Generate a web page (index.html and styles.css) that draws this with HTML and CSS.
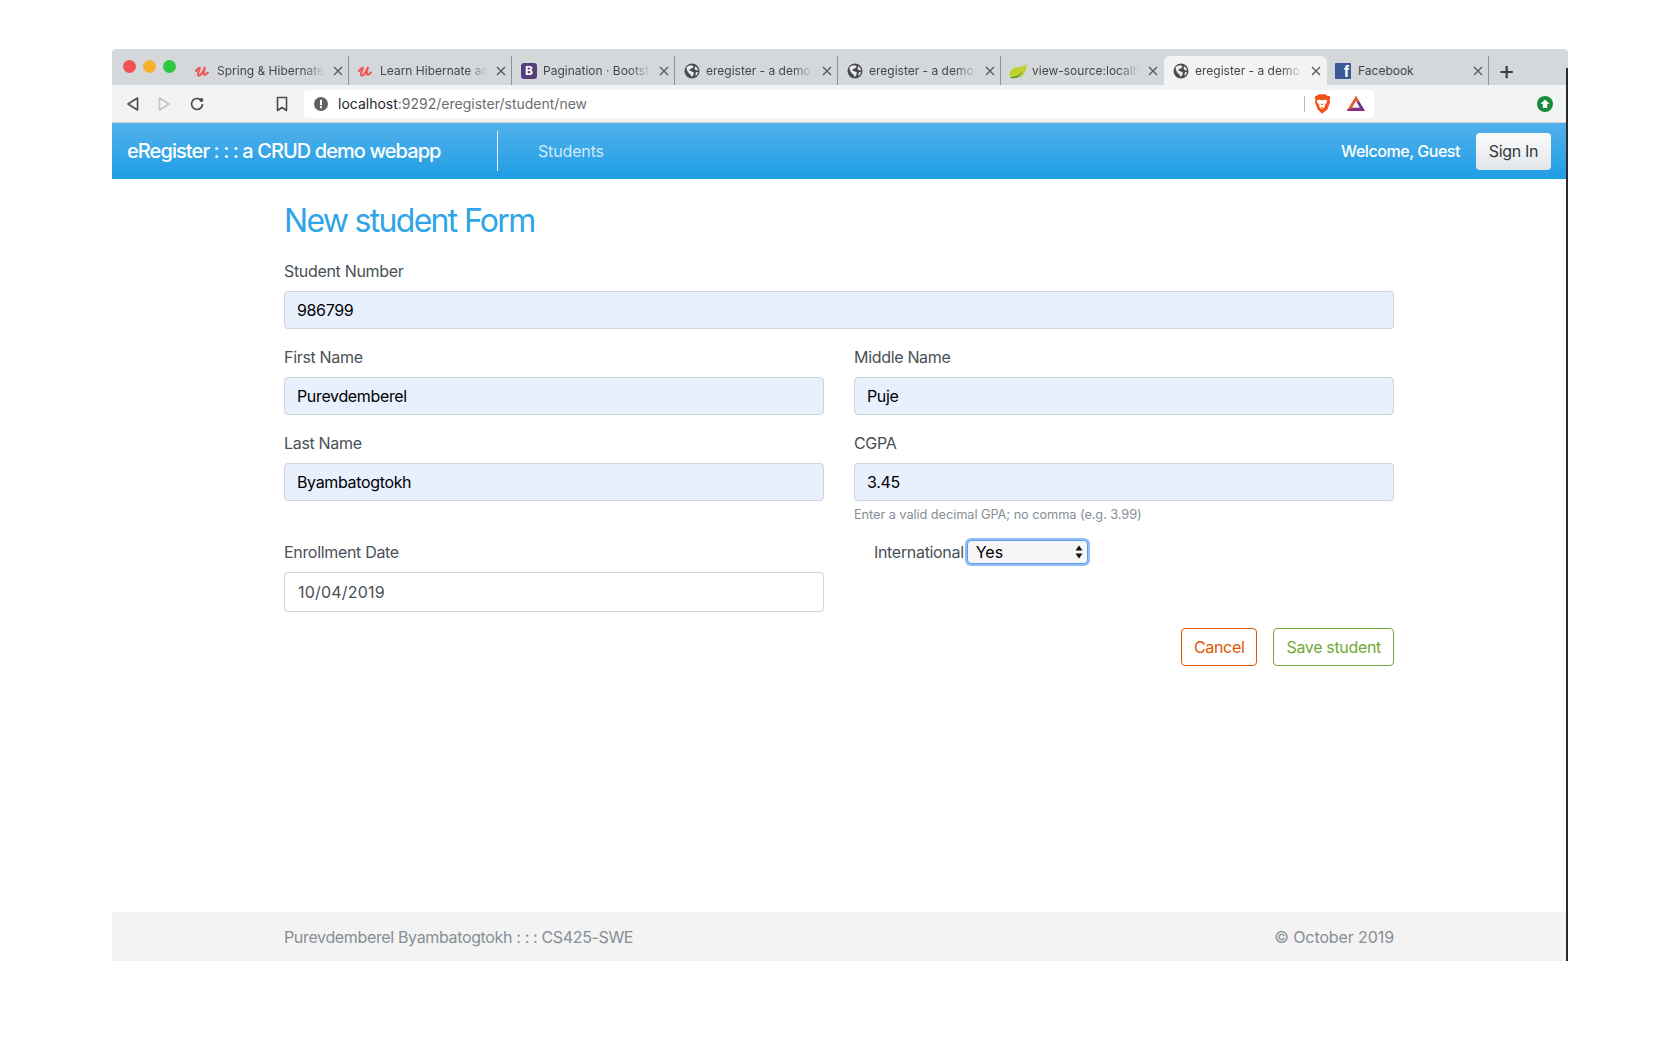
FILE: index.html
```html
<!DOCTYPE html>
<html>
<head>
  <meta http-equiv="Content-Type" content="text/html; charset=utf-8" />
  <title>eregister - a demo webapp</title>
<link rel="stylesheet" href="styles.css">
</head>
<body>

<svg class="defs" width="0" height="0">
  <symbol id="i-udemy" viewBox="0 0 16 16">
    <path d="M1 8c1.500-2 3-3.500 3.800-3-.4 2-2.200 5-1.800 6.800.4 1.400 2 .8 3.300-.8 1.500-1.900 2.800-4.300 3.500-6.300-.5 2.200-1.300 4.800-.9 6.500.3 1.100 2 .7 4-1.700" fill="none" stroke="#ef5a5a" stroke-width="2.100" stroke-linecap="round" stroke-linejoin="round"/>
  </symbol>
  <symbol id="i-globe" viewBox="0 0 16 16">
    <circle cx="8" cy="8" r="7.500" fill="#4a4c50"/>
    <path d="M2.500 4.500C3.800 3 5.500 2.200 7.500 2.200l2.300 1.300-2 2-2 .5-.3 1.800 2.500.6 2 1.400-.8 2.500-1.700 1.700-1-2.500-1.700-1.300-1.800-3zM11.500 3.200l2 2.300.5 2-2.500-.6-1-1.400zM11.800 9.300l2.200-.3-1 2.700-1.500 1.300z" fill="#eceded"/>
  </symbol>
  <symbol id="i-x" viewBox="0 0 10 10">
    <path d="M1 1l8 8M9 1l-8 8" fill="none" stroke="#5a5c60" stroke-width="1.400"/>
  </symbol>
</svg>

<div class="frame">

  <div class="tabstrip">
    <div class="lights">
      <span class="light red"></span>
      <span class="light amber"></span>
      <span class="light green"></span>
    </div>
    <div class="tab sep">
      <svg class="fav"><use href="#i-udemy"/></svg>
      <span class="tab-title">Spring &amp; Hibernate</span>
      <svg class="tab-x"><use href="#i-x"/></svg>
    </div>
    <div class="tab sep">
      <svg class="fav"><use href="#i-udemy"/></svg>
      <span class="tab-title">Learn Hibernate an</span>
      <svg class="tab-x"><use href="#i-x"/></svg>
    </div>
    <div class="tab sep">
      <span class="fav fav-b">B</span>
      <span class="tab-title">Pagination · Bootst</span>
      <svg class="tab-x"><use href="#i-x"/></svg>
    </div>
    <div class="tab sep">
      <svg class="fav"><use href="#i-globe"/></svg>
      <span class="tab-title">eregister - a demo</span>
      <svg class="tab-x"><use href="#i-x"/></svg>
    </div>
    <div class="tab sep">
      <svg class="fav"><use href="#i-globe"/></svg>
      <span class="tab-title">eregister - a demo</span>
      <svg class="tab-x"><use href="#i-x"/></svg>
    </div>
    <div class="tab">
      <svg class="fav fav-leaf" viewBox="0 0 18 15">
        <path d="M17.500 .5c.3 5-1 9.500-4.500 12-3.500 2.300-8.500 2.500-12 .8C-.5 10 1.500 5.500 6 4.200 10 3 14.500 3.500 17.500 .5z" fill="#bfd02f"/>
        <path d="M1 13.500c4.500.2 9-1.200 12.500-5.500-1.800 4.500-5.500 6.800-9.500 6.800-1.200 0-2.300-.4-3-1.300z" fill="#4f9a3a"/>
      </svg>
      <span class="tab-title">view-source:localh</span>
      <svg class="tab-x"><use href="#i-x"/></svg>
    </div>
    <div class="tab active">
      <svg class="fav"><use href="#i-globe"/></svg>
      <span class="tab-title">eregister - a demo</span>
      <svg class="tab-x"><use href="#i-x"/></svg>
    </div>
    <div class="tab tab-fb sep">
      <span class="fav fav-fb">f</span>
      <span class="tab-title">Facebook</span>
      <svg class="tab-x"><use href="#i-x"/></svg>
    </div>
    <span class="newtab">+</span>
  </div>

  <div class="toolbar">
    <svg class="tool tool-back" viewBox="0 0 16 16"><path d="M12.500 2v12L3 8z" fill="none" stroke="#4a4c50" stroke-width="1.600" stroke-linejoin="round"/></svg>
    <svg class="tool tool-fwd" viewBox="0 0 16 16"><path d="M3.500 2v12L13 8z" fill="none" stroke="#c2c4c6" stroke-width="1.600" stroke-linejoin="round"/></svg>
    <svg class="tool tool-reload" viewBox="0 0 16 16"><path d="M13.500 8A5.500 5.500 0 1 1 11 3.400" fill="none" stroke="#4a4c50" stroke-width="1.700"/><circle cx="12.300" cy="4" r="2" fill="#4a4c50"/></svg>
    <svg class="tool tool-mark" viewBox="0 0 16 16"><path d="M3.500 1.500h9v13L8 11.500l-4.500 3z" fill="none" stroke="#4a4c50" stroke-width="1.600" stroke-linejoin="round"/></svg>
    <div class="urlbox">
      <svg class="url-info" viewBox="0 0 14 14"><circle cx="7" cy="7" r="7" fill="#5f6165"/><rect x="6" y="2.800" width="2" height="5.400" fill="#fff"/><rect x="6" y="9.200" width="2" height="2" fill="#fff"/></svg>
      <span class="url-text"><b>localhost</b>:9292/eregister/student/new</span>
      <span class="url-sep"></span>
      <svg class="url-brave" viewBox="0 0 16 18">
        <path d="M3.200 1.500L5 .3h6l1.800 1.200 2 .2.700 1.500-.7 2.300.5 1.800-2.300 6.500L8 17.700l-4-3.900L1.700 7.300l.5-1.800-.7-2.300.7-1.500z" fill="#f1511b"/>
        <path d="M3.800 5.500l2.400-.3L8 5.800l1.800-.6 2.400.3.400 1.600-2.100 2.700-.2 2.200L8 13.800l-2.300-1.800-.2-2.200-2.100-2.700z" fill="#fff"/>
        <path d="M6.500 8.500L8 10.500l1.500-2-1.500.5zM6.800 12h2.400L8 13.200z" fill="#f1511b"/>
      </svg>
      <svg class="url-bat" viewBox="0 0 18 15">
        <path d="M9 0l9 15H0z" fill="#662d91"/>
        <path d="M9 0l3.400 5.700H9L4.800 13H0v2z" fill="#f15a2b"/>
        <path d="M0 15l3.200-2.500h11.600L18 15z" fill="#8f2a80"/>
        <path d="M9 4.800l4 7H5z" fill="#f2f3f4"/>
      </svg>
    </div>
    <svg class="tool tool-up" viewBox="0 0 16 16"><circle cx="8" cy="8" r="8" fill="#1a8a3c"/><path d="M8 3.500L12.500 8H10.200v4H5.800V8H3.500z" fill="#fff"/></svg>
  </div>

  <nav class="navbar">
    <a class="brand" href="#">eRegister : : : a CRUD demo webapp</a>
    <span class="nav-divider"></span>
    <a class="nav-link" href="#">Students</a>
    <span class="nav-welcome">Welcome, Guest</span>
    <a class="btn-signin" href="#">Sign In</a>
  </nav>

  <main class="content">
    <h1 class="page-title">New student Form</h1>
    <form class="form-grid">
      <div class="form-group wide">
        <label>Student Number</label>
        <input class="filled" type="text" value="986799">
      </div>
      <div class="form-group">
        <label>First Name</label>
        <input class="filled" type="text" value="Purevdemberel">
      </div>
      <div class="form-group">
        <label>Middle Name</label>
        <input class="filled" type="text" value="Puje">
      </div>
      <div class="form-group">
        <label>Last Name</label>
        <input class="filled" type="text" value="Byambatogtokh">
      </div>
      <div class="form-group">
        <label>CGPA</label>
        <input class="filled" type="text" value="3.45">
        <small class="hint">Enter a valid decimal GPA; no comma (e.g. 3.99)</small>
      </div>
      <div class="form-group">
        <label>Enrollment Date</label>
        <input class="date" type="text" value="10/04/2019">
      </div>
      <div class="form-group inline-group">
        <label>International</label>
        <span class="select-wrap">
          <select><option>Yes</option><option>No</option></select>
          <svg class="select-arrows" viewBox="0 0 8 14"><path d="M4 .5L7.500 5.500H.5zM4 13.500L.5 8.500h7z" fill="#111"/></svg>
        </span>
      </div>
      <div class="form-actions wide">
        <button class="btn btn-cancel" type="button">Cancel</button>
        <button class="btn btn-save" type="button">Save student</button>
      </div>
    </form>
  </main>

  <footer class="footer">
    <div class="footer-inner">
      <span>Purevdemberel Byambatogtokh : : : CS425-SWE</span>
      <span class="footer-copy">© October 2019</span>
    </div>
  </footer>

</div>

</body>
</html>
```

FILE: styles.css
```css
body {
  margin: 49px 0 0 112px;
  font-family: Inter, "Liberation Sans", sans-serif;
  font-size: 16px;
  letter-spacing: -.32px;
  color: #495057;
  background-color: #fff;
}
a {
  text-decoration: none;
}
.defs {
  position: absolute;
}

.frame {
  position: relative;
  display: flex;
  flex-direction: column;
  width: 1456px;
  height: 912px;
}
.frame::after {
  content: "";
  position: absolute;
  right: 0;
  top: 19px;
  bottom: 0;
  width: 2px;
  background-color: #2a2a2a;
}

/* tabs */
.tabstrip {
  display: flex;
  align-items: flex-end;
  height: 36px;
  background-color: #d5d8db;
  border-radius: 4px 4px 0 0;
  font-size: 12px;
  letter-spacing: 0;
  color: #45474b;
}
.lights {
  align-self: flex-start;
  display: flex;
  gap: 7px;
  width: 63px;
  margin-top: 11px;
  padding-left: 11px;
}
.light {
  width: 13px;
  height: 13px;
  border-radius: 50%;
}
.light.red { background-color: #f0524f; }
.light.amber { background-color: #f6b12c; }
.light.green { background-color: #2cc840; }

.tab {
  display: flex;
  align-items: center;
  box-sizing: border-box;
  width: 163px;
  height: 29px;
  padding-left: 9px;
}
.tab.sep {
  border-right: 1px solid #8e9094;
}
.tab.active {
  background-color: #f2f3f4;
  border-radius: 6px 6px 0 0;
}
.tab-fb {
  width: 162px;
  padding-left: 8px;
}
.fav {
  flex: none;
  width: 16px;
  height: 16px;
}
.fav-leaf {
  width: 18px;
  margin: 0 -1px 0 -1px;
}
.fav-b {
  box-sizing: border-box;
  border-radius: 3px;
  background-color: #563d7c;
  color: #fff;
  font-size: 12px;
  font-weight: 700;
  line-height: 16px;
  text-align: center;
}
.fav-fb {
  border-radius: 1px;
  background-color: #3b5998;
  color: #fff;
  font-family: "Liberation Sans", sans-serif;
  font-size: 16px;
  font-weight: 700;
  line-height: 18px;
  text-align: right;
  padding-right: 2px;
  box-sizing: border-box;
  overflow: hidden;
}
.tab-title {
  flex: none;
  width: 108px;
  margin-left: 6px;
  overflow: hidden;
  white-space: nowrap;
  -webkit-mask-image: linear-gradient(to right, #000 80%, transparent 100%);
  mask-image: linear-gradient(to right, #000 80%, transparent 100%);
}
.tab-fb .tab-title {
  width: 106px;
  margin-left: 7px;
  -webkit-mask-image: none;
  mask-image: none;
}
.tab-x {
  flex: none;
  width: 10px;
  height: 10px;
  margin-left: 8px;
}
.tab-fb .tab-x {
  margin-left: 9px;
}
.newtab {
  align-self: center;
  margin: 6px 0 0 9px;
  font-size: 26px;
  line-height: 24px;
  color: #3c3e42;
}

/* toolbar */
.toolbar {
  display: flex;
  align-items: center;
  box-sizing: border-box;
  height: 38px;
  padding: 0 15px 0 13px;
  background-color: #f2f3f4;
  border-bottom: 1px solid #cfd0d2;
}
.tool {
  flex: none;
  width: 16px;
  height: 16px;
}
.tool-fwd { margin-left: 15px; }
.tool-reload { margin-left: 17px; }
.tool-mark { margin-left: 69px; }
.tool-up { margin-left: auto; }
.urlbox {
  display: flex;
  align-items: center;
  box-sizing: border-box;
  width: 1070px;
  height: 28px;
  margin-left: 14px;
  padding-left: 10px;
  background-color: #fff;
  border-radius: 4px;
  font-size: 14px;
  letter-spacing: 0;
  color: #6b6d71;
}
.url-info {
  flex: none;
  width: 14px;
  height: 14px;
}
.url-text {
  margin-left: 10px;
}
.url-text b {
  font-weight: 400;
  color: #26282c;
}
.url-sep {
  width: 1px;
  height: 16px;
  margin-left: auto;
  background-color: #b5b7ba;
}
.url-brave {
  width: 18px;
  height: 20px;
  margin-left: 8px;
}
.url-bat {
  width: 18px;
  height: 15px;
  margin: 0 9px 0 16px;
}

/* site nav */
.navbar {
  display: flex;
  align-items: center;
  box-sizing: border-box;
  height: 56px;
  padding: 0 17px 0 15px;
  background: linear-gradient(#52b0ea, #1f9ee6);
}
.brand {
  width: 370px;
  font-size: 20px;
  font-weight: 500;
  letter-spacing: -.92px;
  color: #fff;
  white-space: nowrap;
}
.nav-divider {
  width: 1px;
  height: 40px;
  background-color: #e6f3fc;
}
.nav-link {
  margin-left: 40px;
  letter-spacing: -.15px;
  color: rgba(255, 255, 255, .78);
}
.nav-welcome {
  margin-left: auto;
  font-weight: 500;
  letter-spacing: -.45px;
  color: #fff;
}
.btn-signin {
  box-sizing: border-box;
  width: 75px;
  height: 37px;
  margin-left: 16px;
  border-radius: 4px;
  background: linear-gradient(#fafbfb, #e2e6ea);
  color: #343a40;
  line-height: 37px;
  text-align: center;
}

/* form */
.content {
  box-sizing: border-box;
  width: 1110px;
  margin-left: 172px;
  padding-top: 23px;
}
.page-title {
  margin: 0 0 19px;
  font-size: 32px;
  font-weight: 400;
  line-height: 38px;
  letter-spacing: -1.7px;
  color: #2fa4e7;
}
.form-grid {
  display: grid;
  grid-template-columns: 540px 540px;
  column-gap: 30px;
}
.form-group {
  margin-bottom: 16px;
}
.wide {
  grid-column: 1 / 3;
}
.form-group label {
  display: block;
  margin-bottom: 8px;
  line-height: 24px;
}
.form-group input {
  display: block;
  box-sizing: border-box;
  width: 100%;
  height: 38px;
  padding: 0 12px;
  border: 1px solid #ced4da;
  border-radius: 4px;
  font-family: inherit;
  font-size: 16px;
  letter-spacing: -.35px;
}
.filled {
  background-color: #e8f0fe;
  color: #000;
}
.form-group input.date {
  height: 40px;
  padding-left: 13px;
  letter-spacing: .2px;
  background-color: #fff;
  color: #495057;
}
.hint {
  display: block;
  margin-top: 4px;
  font-size: 12.800px;
  line-height: 19px;
  letter-spacing: -.08px;
  color: #868e96;
}
.inline-group {
  display: flex;
  align-items: flex-start;
  padding-left: 20px;
}
.inline-group label {
  margin: 0;
}
.select-wrap {
  position: relative;
  margin: 0 0 0 3px;
}
.select-wrap select {
  display: block;
  box-sizing: border-box;
  width: 121px;
  height: 24px;
  padding-left: 8px;
  border: 1px solid #5e9bea;
  border-radius: 4px;
  outline: none;
  box-shadow: 0 0 0 2px #90bdf5;
  background-color: #f6f6f6;
  font-family: inherit;
  font-size: 16px;
  color: #000;
  -webkit-appearance: none;
  appearance: none;
}
.select-arrows {
  position: absolute;
  right: 5px;
  top: 5px;
  width: 8px;
  height: 14px;
}
.form-actions {
  display: flex;
  justify-content: flex-end;
  gap: 16px;
}
.btn {
  box-sizing: border-box;
  height: 38px;
  padding: 0 12px;
  border: 1px solid;
  border-radius: 4px;
  background-color: #fff;
  font-family: inherit;
  font-size: 16px;
  letter-spacing: -.33px;
}
.btn-cancel {
  border-color: #dd5600;
  color: #dd5600;
}
.btn-save {
  border-color: #73a839;
  color: #73a839;
}

/* footer */
.footer {
  margin-top: auto;
  height: 49px;
  background-color: #f3f3f3;
  letter-spacing: -.35px;
  color: #868e96;
}
.footer-inner {
  display: flex;
  justify-content: space-between;
  align-items: center;
  width: 1110px;
  height: 100%;
  margin-left: 172px;
}
.footer-copy {
  letter-spacing: -.1px;
}
```
